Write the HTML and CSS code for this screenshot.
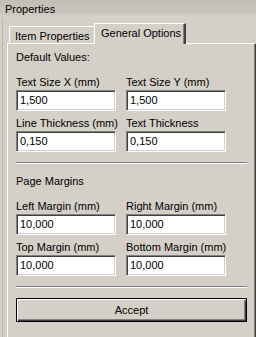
FILE: index.html
```html
<!DOCTYPE html>
<html>
<head>
<meta charset="utf-8">
<link rel="stylesheet" href="styles.css">
</head>
<body>
<div class="window">
  <div class="titlebar">Properties</div>
  <div class="body">
    <div class="tabs">
      <div class="tab">Item Properties</div>
      <div class="tab tab-active">General Options</div>
    </div>
    <div class="panel">
      <div class="heading">Default Values:</div>
      <div class="grid">
        <div class="field"><label class="label">Text Size X (mm)</label><div class="input">1,500</div></div>
        <div class="field"><label class="label">Text Size Y (mm)</label><div class="input">1,500</div></div>
        <div class="field"><label class="label">Line Thickness (mm)</label><div class="input">0,150</div></div>
        <div class="field"><label class="label">Text Thickness</label><div class="input">0,150</div></div>
      </div>
      <div class="sep"></div>
      <div class="heading heading2">Page Margins</div>
      <div class="grid">
        <div class="field"><label class="label">Left Margin (mm)</label><div class="input">10,000</div></div>
        <div class="field"><label class="label">Right Margin (mm)</label><div class="input">10,000</div></div>
        <div class="field"><label class="label">Top Margin (mm)</label><div class="input">10,000</div></div>
        <div class="field"><label class="label">Bottom Margin (mm)</label><div class="input">10,000</div></div>
      </div>
      <div class="sep"></div>
      <div class="button">Accept</div>
    </div>
  </div>
</div>
</body>
</html>
```
FILE: styles.css
```css
html, body {
  margin: 0;
  padding: 0;
}
body {
  font-family: "Liberation Sans", Arial, sans-serif;
  font-size: 11px;
  line-height: 13px;
  color: #000;
  background: #d4d0c8;
}
.window {
  width: 256px;
  height: 337px;
  background: #d4d0c8;
  overflow: hidden;
  display: flex;
  flex-direction: column;
}
.titlebar {
  height: 18px;
  box-sizing: border-box;
  padding: 3px 0 0 5px;
  background: linear-gradient(#c2beb6, #cac6be 70%, #d8d4cc);
  color: #000;
}
.body {
  flex: 1;
  margin-left: 2px;
  border-left: 1px solid #bab6ae;
  padding-top: 5px;
  display: flex;
  flex-direction: column;
}
.tabs {
  display: flex;
  align-items: flex-end;
  margin-left: 4px;
  height: 20px;
}
.tab {
  box-sizing: border-box;
  height: 17px;
  width: 85px;
  margin-left: 2px;
  border-top: 1px solid #fff;
  border-left: 1px solid #fff;
  padding: 3px 0 0 5px;
  white-space: nowrap;
}
.tab-active {
  position: relative;
  z-index: 1;
  height: 21px;
  width: 92px;
  margin-left: 0;
  margin-bottom: -1px;
  padding: 3px 0 0 6px;
  background: #d4d0c8;
  border-right: 2px solid #404040;
  box-shadow: inset -1px 0 0 #808080;
}
.panel {
  flex: 1;
  margin-left: 4px;
  border-top: 1px solid #fff;
  border-left: 1px solid #fff;
  border-right: 1px solid #404040;
  box-shadow: inset -1px 0 0 #808080;
  padding: 7px 8px 0 8px;
  display: flex;
  flex-direction: column;
}
.heading {
  margin-bottom: 12px;
}
.heading2 {
  margin-top: 11px;
}
.grid {
  display: grid;
  grid-template-columns: 100px 100px;
  column-gap: 10px;
  row-gap: 6px;
}
.field {
  display: flex;
  flex-direction: column;
  gap: 1px;
}
.label {
  white-space: nowrap;
}
.input {
  box-sizing: border-box;
  height: 21px;
  background: #fff;
  border-top: 1px solid #808080;
  border-left: 1px solid #808080;
  border-right: 1px solid #fff;
  border-bottom: 1px solid #fff;
  box-shadow: inset 1px 1px 0 #404040, inset -1px -1px 0 #d4d0c8;
  padding: 3px 0 0 3px;
  color: #000;
}
.sep {
  margin-top: 10px;
  height: 1px;
  border-top: 1px solid #808080;
  border-bottom: 1px solid #fff;
  height: 0;
}
.button {
  margin-top: 10px;
  box-sizing: border-box;
  height: 24px;
  border: 1px solid #000;
  box-shadow: inset 1px 1px 0 #fff, inset -1px -1px 0 #404040, inset -2px -2px 0 #808080;
  display: flex;
  align-items: center;
  justify-content: center;
}
```
